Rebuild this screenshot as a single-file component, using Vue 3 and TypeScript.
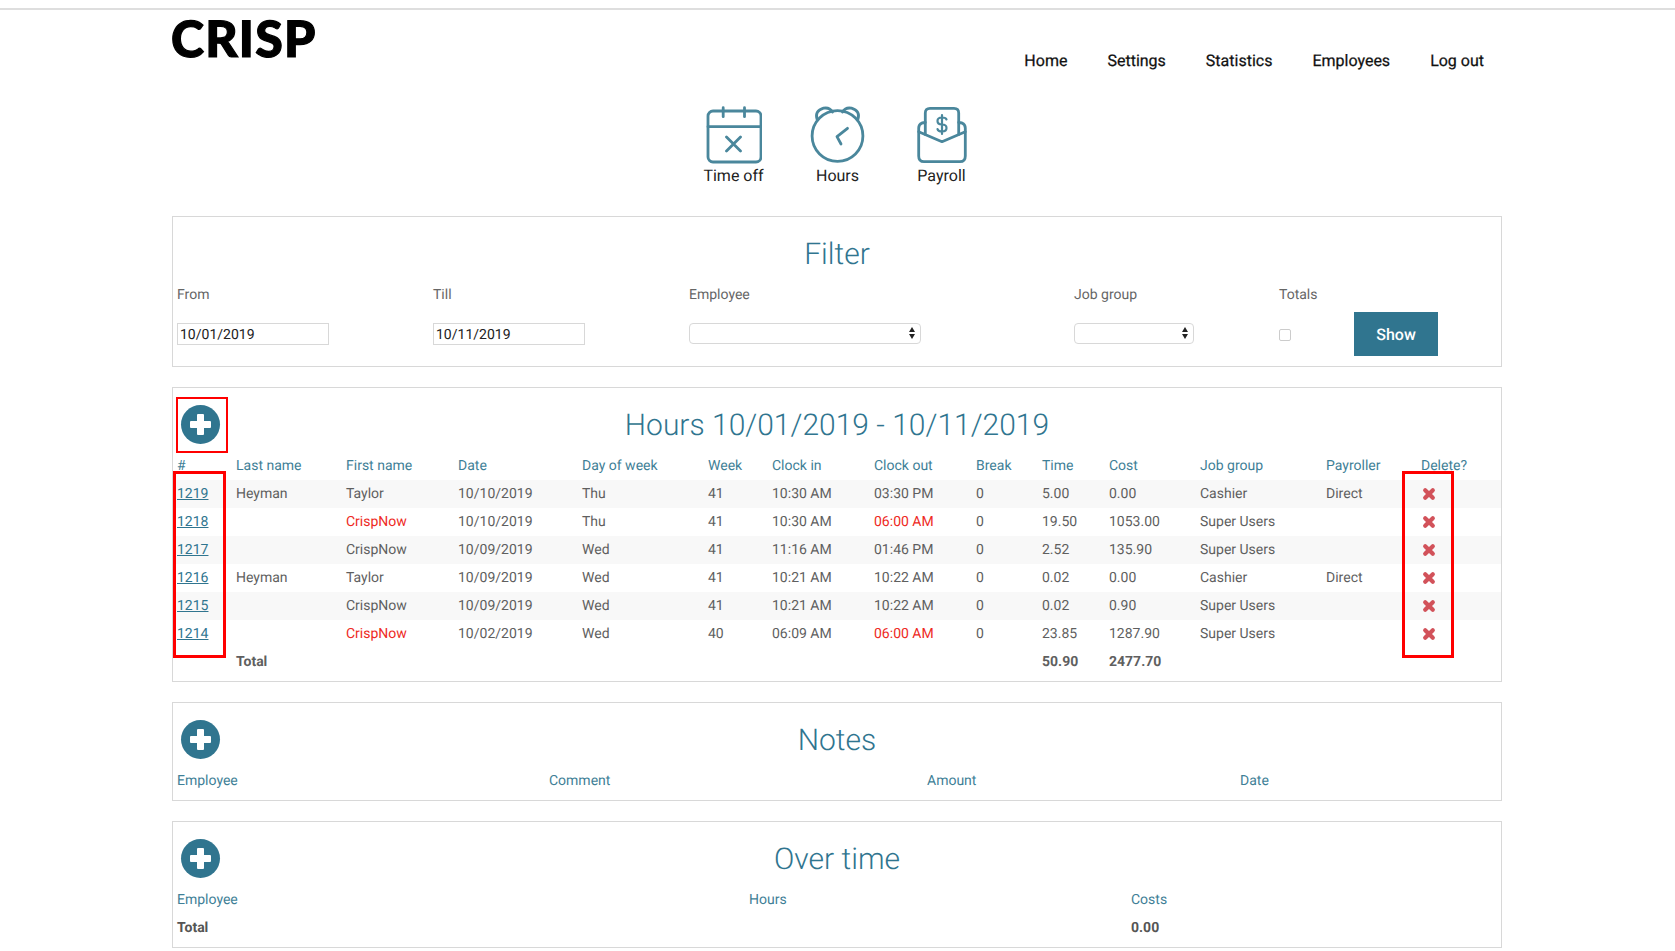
<script setup lang="ts">
interface Row {
  id: number
  last: string
  first: string
  firstRed?: boolean
  date: string
  day: string
  week: number
  clockIn: string
  clockOut: string
  outRed?: boolean
  brk: number
  time: string
  cost: string
  group: string
  payroller: string
}

const columns: string[] = ['#', 'Last name', 'First name', 'Date', 'Day of week', 'Week', 'Clock in', 'Clock out', 'Break', 'Time', 'Cost', 'Job group', 'Payroller', 'Delete?']

const rows: Row[] = [
  { id: 1219, last: 'Heyman', first: 'Taylor', date: '10/10/2019', day: 'Thu', week: 41, clockIn: '10:30 AM', clockOut: '03:30 PM', brk: 0, time: '5.00', cost: '0.00', group: 'Cashier', payroller: 'Direct' },
  { id: 1218, last: '', first: 'CrispNow', firstRed: true, date: '10/10/2019', day: 'Thu', week: 41, clockIn: '10:30 AM', clockOut: '06:00 AM', outRed: true, brk: 0, time: '19.50', cost: '1053.00', group: 'Super Users', payroller: '' },
  { id: 1217, last: '', first: 'CrispNow', date: '10/09/2019', day: 'Wed', week: 41, clockIn: '11:16 AM', clockOut: '01:46 PM', brk: 0, time: '2.52', cost: '135.90', group: 'Super Users', payroller: '' },
  { id: 1216, last: 'Heyman', first: 'Taylor', date: '10/09/2019', day: 'Wed', week: 41, clockIn: '10:21 AM', clockOut: '10:22 AM', brk: 0, time: '0.02', cost: '0.00', group: 'Cashier', payroller: 'Direct' },
  { id: 1215, last: '', first: 'CrispNow', date: '10/09/2019', day: 'Wed', week: 41, clockIn: '10:21 AM', clockOut: '10:22 AM', brk: 0, time: '0.02', cost: '0.90', group: 'Super Users', payroller: '' },
  { id: 1214, last: '', first: 'CrispNow', firstRed: true, date: '10/02/2019', day: 'Wed', week: 40, clockIn: '06:09 AM', clockOut: '06:00 AM', outRed: true, brk: 0, time: '23.85', cost: '1287.90', group: 'Super Users', payroller: '' }
]
</script>

<template>
  <div class="page">
    <div class="wrap">
      <header class="top">
        <div class="logo">CRISP</div>
        <nav class="nav">
          <a>Home</a><a>Settings</a><a>Statistics</a><a>Employees</a><a>Log out</a>
        </nav>
      </header>

      <div class="shortcuts">
        <div class="shortcut">
          <svg width="56" height="60" viewBox="0 0 56 60" fill="none" stroke="#4a879c" stroke-width="2.8" stroke-linecap="round" stroke-linejoin="round">
            <rect x="2" y="6" width="53" height="51" rx="5" />
            <path d="M2 21.700h53M17.200 2.700v9M38.500 2.700v9M20.500 32l14 14M34.500 32l-14 14" />
          </svg>
          <span>Time off</span>
        </div>
        <div class="shortcut">
          <svg width="56" height="60" viewBox="0.5 0 56 60" fill="none" stroke="#4a879c" stroke-width="2.8" stroke-linecap="round" stroke-linejoin="round">
            <circle cx="28" cy="31" r="25.400" />
            <path d="M7.500 14Q5 6 14 3.200Q20 2 23 7M48.500 14Q51 6 42 3.200Q36 2 33 7M38 23.300L27.500 31.700L31.500 39" />
          </svg>
          <span>Hours</span>
        </div>
        <div class="shortcut">
          <svg width="56" height="60" viewBox="1 0 56 60" fill="none" stroke="#4a879c" stroke-width="2.800" stroke-linecap="round" stroke-linejoin="round">
            <path d="M12.300 17.500L9 18Q5.700 19.500 5.700 23V51Q5.700 56.700 11 56.700H47Q52.300 56.700 52.300 51V23Q52.300 19.500 49 18L45.700 17.500" />
            <path d="M5.700 26.700L29 36.700L52.300 26.700" />
            <path d="M12.300 29.500V8Q12.300 3.300 17 3.300H41Q45.700 3.300 45.700 8V29.500" />
            <path stroke-width="2.200" d="M33.500 14.500Q33 12.500 29 12.500Q24.500 12.500 24.500 16T29 19.500T33.500 23Q33.500 26.500 29 26.500Q25 26.500 24.500 24M29 10v19" />
          </svg>
          <span>Payroll</span>
        </div>
      </div>

      <section class="panel filter">
        <h2>Filter</h2>
        <div class="filter-grid">
          <label>From</label>
          <label>Till</label>
          <label>Employee</label>
          <label>Job group</label>
          <label>Totals</label>
          <span></span>
          <div><input class="date" type="text" value="10/01/2019" /></div>
          <div><input class="date" type="text" value="10/11/2019" /></div>
          <div><div class="select emp"><i class="arrows"></i></div></div>
          <div><div class="select job"><i class="arrows"></i></div></div>
          <div><span class="check"></span></div>
          <button class="show">Show</button>
        </div>
      </section>

      <section class="panel hours">
        <div class="add"><span class="plus"></span></div>
        <h2>Hours 10/01/2019 - 10/11/2019</h2>
        <table class="table">
          <colgroup>
            <col class="c1" /><col class="c2" /><col class="c3" /><col class="c4" />
            <col class="c5" /><col class="c6" /><col class="c7" /><col class="c8" />
            <col class="c9" /><col class="c10" /><col class="c11" /><col class="c12" />
            <col class="c13" /><col />
          </colgroup>
          <thead>
            <tr><th v-for="c in columns" :key="c">{{ c }}</th></tr>
          </thead>
          <tbody>
            <tr v-for="r in rows" :key="r.id">
              <td><a class="id">{{ r.id }}</a></td>
              <td>{{ r.last }}</td>
              <td :class="{ red: r.firstRed }">{{ r.first }}</td>
              <td>{{ r.date }}</td>
              <td>{{ r.day }}</td>
              <td>{{ r.week }}</td>
              <td>{{ r.clockIn }}</td>
              <td :class="{ red: r.outRed }">{{ r.clockOut }}</td>
              <td>{{ r.brk }}</td>
              <td>{{ r.time }}</td>
              <td>{{ r.cost }}</td>
              <td>{{ r.group }}</td>
              <td>{{ r.payroller }}</td>
              <td class="del">
                <svg width="14" height="14" viewBox="0 0 14 14"><path d="M3.200 3.200L10.800 10.800M10.800 3.200L3.200 10.800" stroke="#d2525a" stroke-width="4.200" stroke-linecap="round" fill="none" /></svg>
              </td>
            </tr>
            <tr class="total">
              <td></td><td>Total</td><td colspan="7"></td><td>50.90</td><td>2477.70</td><td colspan="3"></td>
            </tr>
          </tbody>
        </table>
        <div class="mark mark-add"></div>
        <div class="mark mark-ids"></div>
        <div class="mark mark-del"></div>
      </section>

      <section class="panel notes">
        <div class="add"><span class="plus"></span></div>
        <h2>Notes</h2>
        <div class="heads notes-heads">
          <span>Employee</span><span>Comment</span><span>Amount</span><span>Date</span>
        </div>
      </section>

      <section class="panel over">
        <div class="add"><span class="plus"></span></div>
        <h2>Over time</h2>
        <div class="heads over-heads">
          <span>Employee</span><span>Hours</span><span>Costs</span>
        </div>
        <div class="heads over-heads over-total">
          <span>Total</span><span></span><span>0.00</span>
        </div>
      </section>
    </div>
  </div>
</template>

<style>
body { margin: 0; background: #fff; }
</style>

<style scoped>
.page {
  border-top: 2px solid #dedede;
  margin-top: 8px;
  height: 941px;
  font-family: Roboto, "Liberation Sans", sans-serif;
  font-size: 14px;
  color: #5f5f5f;
  text-rendering: geometricPrecision;
}
.wrap { width: 1330px; margin: 0 0 0 172px; }
.top { display: flex; justify-content: space-between; height: 85px; }
.logo {
  font-family: Lato, "Liberation Sans", sans-serif;
  font-weight: 900;
  font-size: 50px;
  line-height: 50px;
  color: #000;
  letter-spacing: 1.2px;
  -webkit-text-stroke: 1.2px #000;
  margin: 3px 0 0 -1px;
}
.nav { display: flex; gap: 40px; padding: 41px 18px 0 0; font-size: 16px; font-weight: 400; line-height: 20px; color: #111; -webkit-text-stroke: 0.25px #111; }
.shortcuts { display: flex; justify-content: center; gap: 46px; height: 121px; padding-left: 1px; padding-top: 10px; box-sizing: border-box; }
.shortcut { display: flex; flex-direction: column; align-items: center; width: 58px; font-size: 16px; line-height: 20px; color: #222; white-space: nowrap; }
.shortcut svg { margin-bottom: 1px; }
.panel { position: relative; border: 1px solid #d8d8d8; box-sizing: border-box; width: 1330px; margin-bottom: 20px; padding-top: 20px; }
h2 { margin: 0; text-align: center; font-weight: 300; font-size: 30px; line-height: 36px; color: #30758f; }
.filter { height: 151px; }
.filter-grid {
  display: grid;
  grid-template-columns: 256px 256px 385px 205px 75px 1fr;
  row-gap: 7px;
  padding-left: 4px;
  margin-top: 12px;
  align-items: center;
  line-height: 20px;
}
.filter-grid label { height: 20px; color: #666; }
.date { width: 152px; height: 22px; box-sizing: border-box; border: 1px solid #d8d8d8; padding: 2px 2px 0; font: 14px Roboto, sans-serif; color: #222; display: block; outline: none; text-rendering: geometricPrecision; }
.select { position: relative; height: 21px; box-sizing: border-box; border: 1px solid #d8d8d8; border-radius: 4px; margin-bottom: 2px; }
.select.emp { width: 232px; }
.select.job { width: 120px; }
.arrows::before, .arrows::after { content: ""; position: absolute; right: 5px; border-left: 3px solid transparent; border-right: 3px solid transparent; }
.arrows::before { top: 3px; border-bottom: 5px solid #222; }
.arrows::after { top: 10px; border-top: 5px solid #222; }
.check { display: block; width: 12px; height: 12px; box-sizing: border-box; border: 1px solid #ccc; border-radius: 2px; margin-top: 2px; }
.show { width: 84px; height: 44px; border: 0; background: #30758f; color: #fff; font: 500 16px Roboto, sans-serif; padding: 0; text-rendering: geometricPrecision; }
.hours { height: 295px; }
.add { position: absolute; left: 8px; top: 17px; }
.plus { display: block; position: relative; width: 39px; height: 39px; border-radius: 50%; background: #30758f; }
.plus::before, .plus::after { content: ""; position: absolute; background: #fff; }
.plus::before { left: 9px; top: 16px; width: 21px; height: 7px; border-radius: 1px; }
.plus::after { left: 16px; top: 9px; width: 7px; height: 21px; border-radius: 1px; }
.table { border-collapse: collapse; table-layout: fixed; width: 1328px; margin-top: 8px; }
.c1 { width: 59px; } .c2 { width: 110px; } .c3 { width: 112px; } .c4 { width: 124px; }
.c5 { width: 126px; } .c6 { width: 64px; } .c7 { width: 102px; } .c8 { width: 102px; }
.c9 { width: 66px; } .c10 { width: 67px; } .c11 { width: 91px; } .c12 { width: 126px; } .c13 { width: 95px; }
.table th { text-align: left; font-weight: 400; color: #3f7f97; height: 28px; padding: 0 0 0 4px; }
.table td { height: 28px; padding: 0 0 0 4px; white-space: nowrap; }
.table tbody tr:nth-child(odd):not(.total) { background: #f8f8f8; }
.table .total td { font-weight: 700; }
.red { color: #ee2a24; }
.id { color: #30758f; text-decoration: underline; }
.del svg { display: block; margin-left: 1px; }
.mark { position: absolute; border: 3px solid #f00; box-sizing: border-box; }
.mark-add { left: 3px; top: 9px; width: 52px; height: 56px; border-width: 2px; }
.mark-ids { left: 0; top: 83px; width: 53px; height: 187px; }
.mark-del { left: 1229px; top: 83px; width: 52px; height: 187px; }
.heads { display: grid; padding-left: 4px; color: #3f7f97; line-height: 28px; }
.notes { height: 99px; }
.notes-heads { grid-template-columns: 372px 378px 313px 1fr; margin-top: 8px; }
.over { height: 127px; margin-bottom: 0; }
.over-heads { grid-template-columns: 572px 382px 1fr; margin-top: 8px; }
.over-total { margin-top: 0; color: #555; font-weight: 700; }
</style>
